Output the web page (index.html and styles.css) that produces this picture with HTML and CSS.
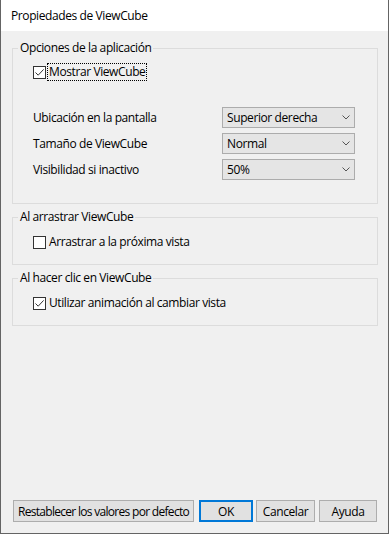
FILE: index.html
```html
<!DOCTYPE html>
<html lang="es">
<head>
    <meta charset="UTF-8">
    <title>Propiedades de ViewCube</title>
    <link rel="stylesheet" href="styles.css">
</head>
<body>

    <div class="window">
        <div class="titlebar">Propiedades de ViewCube</div>

        <div class="content">
            <fieldset class="group group-app">
                <legend>Opciones de la aplicación</legend>

                <label class="check-row">
                    <span class="checkbox checked">
                        <svg width="11" height="11" viewBox="0 0 11 11"><path d="M1.5 5.5 L4.2 8.2 L9.6 2.4" fill="none" stroke="#333" stroke-width="1"/></svg>
                    </span>
                    <span class="check-label focused">Mostrar ViewCube</span>
                </label>

                <div class="option-rows">
                    <div class="option-row">
                        <span class="option-label">Ubicación en la pantalla</span>
                        <div class="combo">Superior derecha<span class="chevron"><svg width="8" height="5" viewBox="0 0 8 5"><path d="M0.5 0.5 L4 4 L7.5 0.5" fill="none" stroke="#555" stroke-width="1"/></svg></span></div>
                    </div>
                    <div class="option-row">
                        <span class="option-label">Tamaño de ViewCube</span>
                        <div class="combo">Normal<span class="chevron"><svg width="8" height="5" viewBox="0 0 8 5"><path d="M0.5 0.5 L4 4 L7.5 0.5" fill="none" stroke="#555" stroke-width="1"/></svg></span></div>
                    </div>
                    <div class="option-row">
                        <span class="option-label">Visibilidad si inactivo</span>
                        <div class="combo">50%<span class="chevron"><svg width="8" height="5" viewBox="0 0 8 5"><path d="M0.5 0.5 L4 4 L7.5 0.5" fill="none" stroke="#555" stroke-width="1"/></svg></span></div>
                    </div>
                </div>
            </fieldset>

            <fieldset class="group group-small">
                <legend>Al arrastrar ViewCube</legend>
                <label class="check-row">
                    <span class="checkbox"></span>
                    <span class="check-label">Arrastrar a la próxima vista</span>
                </label>
            </fieldset>

            <fieldset class="group group-small">
                <legend>Al hacer clic en ViewCube</legend>
                <label class="check-row">
                    <span class="checkbox checked">
                        <svg width="11" height="11" viewBox="0 0 11 11"><path d="M1.5 5.5 L4.2 8.2 L9.6 2.4" fill="none" stroke="#333" stroke-width="1"/></svg>
                    </span>
                    <span class="check-label">Utilizar animación al cambiar vista</span>
                </label>
            </fieldset>

            <div class="buttons">
                <button class="btn btn-reset">Restablecer los valores por defecto</button>
                <button class="btn btn-ok">OK</button>
                <button class="btn btn-cancel">Cancelar</button>
                <button class="btn btn-help">Ayuda</button>
            </div>
        </div>
    </div>

</body>
</html>
```

FILE: styles.css
```css
html, body {
    margin: 0;
    padding: 0;
}
body {
    font-family: 'Open Sans', 'Noto Sans', sans-serif;
    font-size: 12px;
    letter-spacing: -0.4px;
    color: #000;
    background: #f0f0f0;
}
.window {
    width: 387px;
    height: 533px;
    border: 1px solid #646464;
    border-top: none;
    background: #f0f0f0;
    display: flex;
    flex-direction: column;
}
.titlebar {
    height: 31px;
    line-height: 31px;
    padding-left: 10px;
    background: #fff;
    flex-shrink: 0;
}
.content {
    flex: 1;
    display: flex;
    flex-direction: column;
    padding: 0 10px 0 11px;
}
.group {
    margin: 0;
    padding: 0 0 14px 20px;
    border: 1px solid #dcdcdc;
    min-inline-size: 0;
}
.group legend {
    padding: 0 2px;
    margin-left: -15px;
    line-height: 16px;
    height: 16px;
}
.group-app {
    margin-top: 9px;
    padding-top: 8px;
    padding-bottom: 23px;
}
.group-small {
    margin-top: 5px;
    padding-top: 9px;
}
.check-row {
    display: flex;
    align-items: center;
    height: 16px;
    line-height: 16px;
}
.checkbox {
    width: 11px;
    height: 11px;
    border: 1px solid #333;
    background: #fff;
    display: flex;
    align-items: center;
    justify-content: center;
    flex-shrink: 0;
}
.check-label {
    margin-left: 2px;
    padding: 0 1px;
}
.check-label.focused {
    outline: 1px dotted #000;
    outline-offset: 0;
}
.option-rows {
    margin-top: 27px;
    display: flex;
    flex-direction: column;
    gap: 5px;
}
.option-row {
    display: flex;
    align-items: center;
    height: 21px;
}
.option-label {
    width: 189px;
}
.combo {
    width: 127px;
    height: 19px;
    line-height: 19px;
    border: 1px solid #acacac;
    background: #e5e5e5;
    padding-left: 4px;
    display: flex;
    align-items: center;
    justify-content: space-between;
}
.chevron {
    width: 8px;
    height: 5px;
    margin-right: 4px;
    display: flex;
}
.buttons {
    margin-top: auto;
    margin-bottom: 11px;
    padding-left: 1px;
    display: flex;
}
.btn {
    font-family: inherit;
    font-size: 12px;
    letter-spacing: -0.4px;
    color: #000;
    height: 22px;
    padding: 0;
    white-space: nowrap;
    background: #e1e1e1;
    border: 1px solid #adadad;
}
.btn-reset {
    width: 181px;
    letter-spacing: -0.7px;
}
.btn-ok {
    width: 54px;
    margin-left: 5px;
    border: 2px solid #0078d7;
}
.btn-cancel {
    width: 59px;
    margin-left: 3px;
}
.btn-help {
    width: 58px;
    margin-left: 4px;
}
```
